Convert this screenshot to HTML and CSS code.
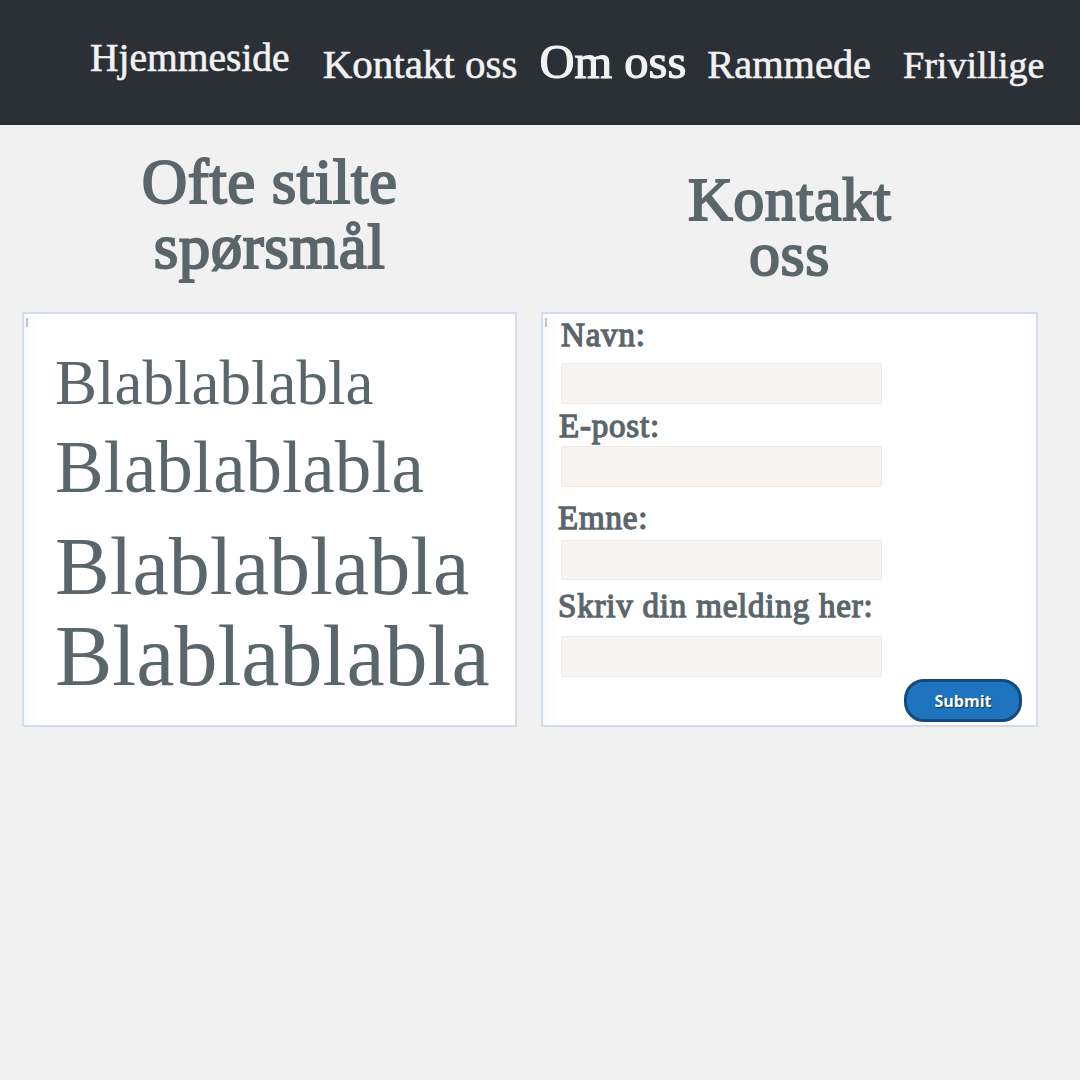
FILE: index.html
```html
<!DOCTYPE html>
<html lang="no">
<head>
<meta charset="utf-8">
<title>Kontakt oss</title>
<link rel="stylesheet" href="styles.css">
</head>
<body>
<header class="topbar">
  <nav class="nav">
    <a class="nav-link nav-home" href="#">Hjemmeside</a>
    <a class="nav-link nav-contact" href="#">Kontakt oss</a>
    <a class="nav-link nav-about" href="#">Om oss</a>
    <a class="nav-link nav-frame" href="#">Rammede</a>
    <a class="nav-link nav-vol" href="#">Frivillige</a>
  </nav>
</header>
<main class="main">
  <section class="col">
    <h2 class="col-title title-faq"><span class="tl">Ofte stilte</span><span class="tl">spørsmål</span></h2>
    <div class="panel faq">
      <span class="caret"></span>
      <p class="bla bla-1">Blablablabla</p>
      <p class="bla bla-2">Blablablabla</p>
      <p class="bla bla-3">Blablablabla</p>
      <p class="bla bla-4">Blablablabla</p>
    </div>
  </section>
  <section class="col">
    <h2 class="col-title title-contact"><span class="tl">Kontakt</span><span class="tl">oss</span></h2>
    <form class="panel form">
      <span class="caret"></span>
      <label class="lbl lbl-name" for="navn">Navn:</label>
      <input class="field f-name" id="navn" type="text">
      <label class="lbl lbl-mail" for="epost">E-post:</label>
      <input class="field f-mail" id="epost" type="text">
      <label class="lbl lbl-subj" for="emne">Emne:</label>
      <input class="field f-subj" id="emne" type="text">
      <label class="lbl lbl-msg" for="melding">Skriv din melding her:</label>
      <input class="field f-msg" id="melding" type="text">
      <button class="submit" type="button">Submit</button>
    </form>
  </section>
</main>
</body>
</html>
```

FILE: styles.css
```css
* { box-sizing: border-box; }

body {
  margin: 0;
  background: #f1f1f1;
  font-family: "Liberation Serif", "Times New Roman", serif;
  color: #5b666b;
}

.topbar {
  height: 125px;
  background: #2b2f36;
}

.nav {
  display: flex;
  align-items: baseline;
  padding: 38px 0 0 90px;
}

.nav-link {
  color: #f2f2f2;
  text-decoration: none;
  line-height: 1;
  white-space: nowrap;
  -webkit-text-stroke: 0.6px #f2f2f2;
}

.nav-home {
  font-size: 39.5px;
  align-self: flex-start;
  margin-top: 1px;
}
.nav-contact { font-size: 41px; margin-left: 33px; }
.nav-about { font-size: 48.5px; margin-left: 22px; -webkit-text-stroke: 1.2px #f2f2f2; }
.nav-frame { font-size: 40.4px; margin-left: 21px; }
.nav-vol { font-size: 38px; margin-left: 32px; }

.main {
  display: grid;
  grid-template-columns: 495px 497px;
  column-gap: 24px;
  padding: 0 22px;
}

.col {
  display: flex;
  flex-direction: column;
}

.col-title {
  margin: 0;
  text-align: center;
  font-weight: normal;
  color: #5b666b;
  -webkit-text-stroke: 2px #5b666b;
  letter-spacing: 0.5px;
}

.tl { display: block; }

.title-faq {
  font-size: 63px;
  line-height: 65px;
  margin: 25px 0 32px;
}

.title-contact {
  font-size: 62px;
  line-height: 55px;
  margin: 47px 0 30px;
}

.panel {
  position: relative;
  height: 415px;
  background: #ffffff;
  border: 2px solid #d3dcec;
  box-shadow: inset 14px 0 14px -10px #f3f6fb;
}

.caret {
  position: absolute;
  left: 2px;
  top: 4px;
  width: 2px;
  height: 9px;
  background: #c4c4c4;
}

.faq {
  padding: 38px 0 0 31px;
}

.bla {
  margin: 0;
  line-height: 1;
  white-space: nowrap;
}
.bla-1 { font-size: 63px; }
.bla-2 { font-size: 73px; margin-top: 16px; }
.bla-3 { font-size: 82px; margin-top: 22px; }
.bla-4 { font-size: 86px; margin-top: 5px; }

.form {
  display: flex;
  flex-direction: column;
  align-items: flex-start;
  padding: 5px 14px 0 18px;
}

.lbl {
  display: block;
  font-size: 33px;
  font-weight: normal;
  line-height: 1;
  color: #5b666b;
  -webkit-text-stroke: 1.3px #5b666b;
  letter-spacing: 0.8px;
}

.lbl-mail { margin-top: 6px; margin-left: -2px; }
.lbl-subj { margin-top: 15px; margin-left: -3px; }
.lbl-msg { margin-top: 10px; margin-left: -3px; }

.field {
  display: block;
  width: 321px;
  height: 41px;
  margin: 0;
  background: #f8f4f2;
  border: 1px solid #eeeae8;
  border-radius: 2px;
}

.f-name { margin-top: 11px; }
.f-mail { margin-top: 3px; }
.f-subj { margin-top: 5px; height: 40px; }
.f-msg { margin-top: 13px; }

.submit {
  align-self: flex-end;
  margin-top: 2px;
  width: 118px;
  height: 43px;
  background: #1f74bf;
  border: 3px solid #124a7c;
  border-radius: 20px;
  color: #ffffff;
  font-family: "Open Sans", "Liberation Sans", sans-serif;
  font-weight: bold;
  font-size: 16px;
  text-shadow: 1px 1px 1px rgba(0, 0, 0, 0.55);
  padding: 0;
}
```
